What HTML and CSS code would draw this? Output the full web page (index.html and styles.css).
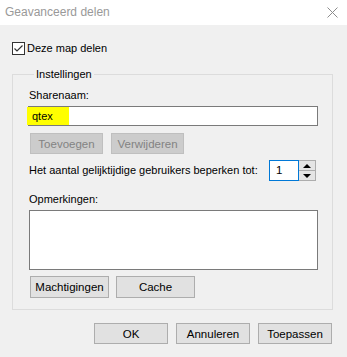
FILE: index.html
```html
<!DOCTYPE html>
<html lang="nl">
<head>
    <meta charset="UTF-8">
    <title>Geavanceerd delen</title>
    <link rel="stylesheet" href="styles.css">
</head>
<body>
    <div class="window">
        <div class="titlebar">
            <span class="title">Geavanceerd delen</span>
            <svg class="close" width="11" height="11" viewBox="0 0 11 11">
                <path d="M0.5 0.5 L10.5 10.5 M10.5 0.5 L0.5 10.5" stroke="#8c8c8c" stroke-width="1" fill="none"/>
            </svg>
        </div>
        <div class="content">
            <label class="check">
                <svg width="13" height="13" viewBox="0 0 13 13">
                    <rect x="0.5" y="0.5" width="12" height="12" fill="#fff" stroke="#333"/>
                    <path d="M2.5 6.5 L5 9 L10.5 3.5" stroke="#333" stroke-width="1.2" fill="none"/>
                </svg>
                <span>Deze map delen</span>
            </label>

            <fieldset class="group">
                <legend>Instellingen</legend>
                <div class="label first">Sharenaam:</div>
                <div class="field"><span class="mark">qtex</span></div>
                <div class="row buttons">
                    <button class="btn disabled">Toevoegen</button>
                    <button class="btn disabled">Verwijderen</button>
                </div>
                <div class="row limit">
                    <span>Het aantal gelijktijdige gebruikers beperken tot:</span>
                    <div class="spin">
                        <div class="spin-value">1</div>
                        <div class="spin-arrows">
                            <div class="arrow up"></div>
                            <div class="arrow down"></div>
                        </div>
                    </div>
                </div>
                <div class="label">Opmerkingen:</div>
                <div class="memo"></div>
                <div class="row buttons lower">
                    <button class="btn wide">Machtigingen</button>
                    <button class="btn wide">Cache</button>
                </div>
            </fieldset>

            <div class="footer">
                <button class="btn action">OK</button>
                <button class="btn action">Annuleren</button>
                <button class="btn action">Toepassen</button>
            </div>
        </div>
    </div>
</body>
</html>
```

FILE: styles.css
```css
* {
    margin: 0;
    padding: 0;
    box-sizing: border-box;
}

body {
    width: 347px;
    height: 357px;
    background-color: #f0f0f0;
    font-family: "Segoe UI", "Liberation Sans", Arial, sans-serif;
    font-size: 11px;
    line-height: 15px;
    color: #000;
    overflow: hidden;
    white-space: nowrap;
}

.titlebar {
    height: 25px;
    background-color: #fff;
    display: flex;
    align-items: center;
    justify-content: space-between;
    padding: 0 9px 1px 5px;
}

.title {
    color: #999;
    font-size: 12px;
}

.content {
    padding: 17px 14px 0 12px;
}

.check {
    display: flex;
    align-items: center;
    gap: 2px;
    height: 13px;
}

.check svg {
    display: block;
}

.group {
    margin-top: 12px;
    border: 1px solid #dcdcdc;
    padding: 0 13px 11px 16px;
    width: 321px;
}

.group legend {
    margin-left: 5px;
    padding: 0 2px;
    line-height: 15px;
}

.label {
    margin-top: 11px;
}

.label.first {
    margin-top: 6px;
}

.field {
    margin-top: 3px;
    margin-left: -1px;
    width: 290px;
    height: 20px;
    background-color: #fff;
    border: 1px solid #7a7a7a;
    display: flex;
    align-items: center;
}

.mark {
    display: inline-block;
    margin-left: -2px;
    height: 18px;
    line-height: 18px;
    padding: 0 16px 0 5px;
    background-color: #ffff00;
}

.row {
    display: flex;
    gap: 8px;
}

.buttons {
    margin-top: 7px;
    padding-left: 1px;
}

.btn {
    font-family: inherit;
    font-size: 11.5px;
    height: 21px;
    width: 73px;
    background-color: #e1e1e1;
    border: 1px solid #adadad;
    color: #000;
}

.btn.disabled {
    background-color: #cccccc;
    border-color: #bfbfbf;
    color: #838383;
}

.limit {
    margin-top: 6px;
    align-items: center;
    justify-content: space-between;
    width: 287px;
}

.spin {
    display: flex;
    height: 21px;
}

.spin-value {
    width: 30px;
    height: 21px;
    background-color: #fff;
    border: 1px solid #0078d7;
    padding-left: 6px;
    line-height: 19px;
    font-size: 11.5px;
}

.spin-arrows {
    width: 17px;
    height: 21px;
    border: 1px solid #adadad;
    border-left: none;
    display: flex;
    flex-direction: column;
    gap: 1px;
    background-color: #adadad;
}

.arrow {
    flex: 1;
    background-color: #e5e5e5;
    position: relative;
}

.arrow::after {
    content: "";
    position: absolute;
    left: 4px;
    border-left: 4px solid transparent;
    border-right: 4px solid transparent;
}

.arrow.up::after {
    top: 3px;
    border-bottom: 4px solid #000;
}

.arrow.down::after {
    top: 3px;
    border-top: 4px solid #000;
}

.memo {
    margin-top: 3px;
    width: 289px;
    height: 60px;
    background-color: #fff;
    border: 1px solid #7a7a7a;
}

.lower {
    margin-top: 6px;
    gap: 7px;
}

.btn.wide {
    width: 79px;
    height: 22px;
}

.footer {
    margin-top: 13px;
    display: flex;
    justify-content: flex-end;
    gap: 8px;
    padding-right: 1px;
}

.btn.action {
    width: 74px;
}
```
